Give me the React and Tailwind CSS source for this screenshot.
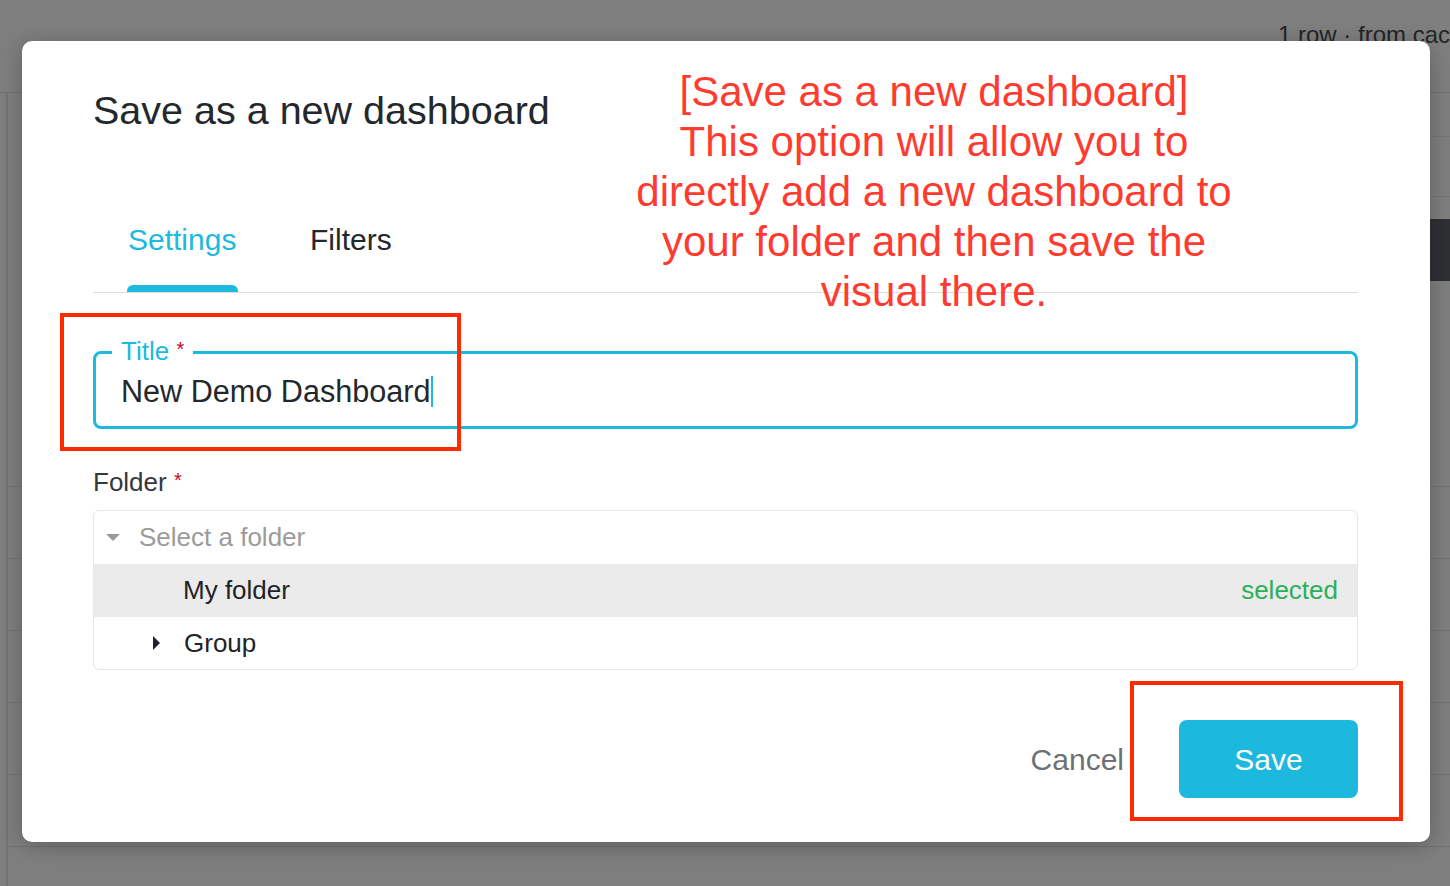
import React from 'react';

const rowLines = [488, 560, 633, 705, 777, 850];

const Backdrop = () => (
  <div className="flex h-full flex-col">
    <div className="flex h-[93px] shrink-0 border-b border-[#727272] pt-[20px]">
      <span className="whitespace-nowrap pl-[1278px] text-[24px] leading-[30px] text-[#262626]">1 row · from cache</span>
    </div>
    <div className="flex flex-1">
      <div className="w-[8px] shrink-0 border-r-2 border-[#737373]" />
      <div className="flex flex-1 flex-col">
        <div className="ml-auto h-[44px] w-[120px] border-b border-[#767676]" />
        <div className="ml-auto h-[60px] w-[120px] border-b border-[#767676]" />
        <div className="h-[22px]" />
        <div className="flex h-[62px] justify-end">
          <div className="w-[60px] bg-[#2f3033]" />
        </div>
        <div className="h-[205px]" />
        {rowLines.map((y) => (
          <div key={y} className="h-[72px] border-t border-[#737373]" />
        ))}
      </div>
    </div>
  </div>
);

const Caret = ({ dir }) =>
  dir === 'down' ? (
    <svg width="14" height="8" viewBox="0 0 14 8">
      <path d="M0 0h14L7 7z" fill="#9b9b9b" />
    </svg>
  ) : (
    <svg width="8" height="14" viewBox="0 0 8 14">
      <path d="M0 0v14l7-7z" fill="#1f2327" />
    </svg>
  );

const App = () => {
  return (
    <div className="relative h-[886px] w-[1450px] overflow-hidden bg-[#7f7f7f] font-['Liberation_Sans',Arial,sans-serif]">
      <Backdrop />

      <div className="absolute left-[22px] top-[41px] flex h-[801px] w-[1408px] flex-col rounded-[10px] bg-white pl-[71px] pr-[72px] pt-[45px] shadow-[0_4px_24px_rgba(0,0,0,0.25)]">
        <h2 className="text-[39.5px] font-normal leading-[48px] text-[#23282d]">Save as a new dashboard</h2>

        {/* tabs */}
        <div className="mt-[88px] flex gap-[72px] border-b border-[#dedede] pl-[34px]">
          <div className="flex flex-col">
            <span className="pl-[1px] text-[30px] leading-[36px] text-[#1db9df]">Settings</span>
            <div className="mt-[27px] h-[7px] w-[111px] rounded-t-[6px] bg-[#1db9df]" />
          </div>
          <div className="flex flex-col">
            <span className="text-[30px] leading-[36px] text-[#23282d]">Filters</span>
          </div>
        </div>

        {/* title field */}
        <fieldset className="mt-[45px] rounded-[8px] border-[3px] border-[#1db9df] px-0 pb-[17px] pt-[7px]">
          <legend className="ml-[16px] px-[9px] text-[26px] leading-[26px] text-[#1db9df]">
            Title <span className="relative -top-[4px] text-[20px] text-[#d0021b]">*</span>
          </legend>
          <div className="flex items-center pl-[25px] text-[30.6px] leading-[36px] text-[#23282d]">
            New Demo Dashboard
            <span className="ml-[1px] inline-block h-[31px] w-[2px] bg-[#1db9df]" />
          </div>
        </fieldset>

        {/* folder */}
        <div className="mt-[38px] text-[26px] leading-[30px] text-[#33383d]">
          Folder <span className="relative -top-[4px] text-[20px] text-[#d0021b]">*</span>
        </div>
        <div className="mt-[11px] overflow-hidden rounded-[6px] border border-[#e6e6e6] text-[26px]">
          <div className="flex h-[53px] items-center gap-[19px] pl-[12px]">
            <Caret dir="down" />
            <span className="text-[#9b9b9b]">Select a folder</span>
          </div>
          <div className="flex h-[53px] items-center justify-between bg-[#ebebeb] pl-[89px] pr-[19px]">
            <span className="text-[#1f2327]">My folder</span>
            <span className="text-[#2bb05a]">selected</span>
          </div>
          <div className="flex h-[52px] items-center gap-[23px] pl-[59px]">
            <Caret dir="right" />
            <span className="text-[#1f2327]">Group</span>
          </div>
        </div>

        {/* footer */}
        <div className="mt-[50px] flex items-center justify-end gap-[55px]">
          <button className="text-[30px] text-[#6c7176]">Cancel</button>
          <button className="h-[78px] w-[179px] rounded-[8px] bg-[#1cb8de] text-[30px] text-white">Save</button>
        </div>

        {/* annotations */}
        <p className="absolute left-[612px] top-[26px] w-[600px] text-center text-[42px] leading-[50px] text-[#ff3b30]">
          [Save as a new dashboard]
          <br />
          This option will allow you to
          <br />
          directly add a new dashboard to
          <br />
          your folder and then save the
          <br />
          visual there.
        </p>
        <div className="absolute left-[38px] top-[272px] h-[138px] w-[401px] border-4 border-[#ff2a00]" />
        <div className="absolute left-[1108px] top-[640px] h-[140px] w-[273px] border-4 border-[#ff2a00]" />
      </div>
    </div>
  );
};

export default App;
